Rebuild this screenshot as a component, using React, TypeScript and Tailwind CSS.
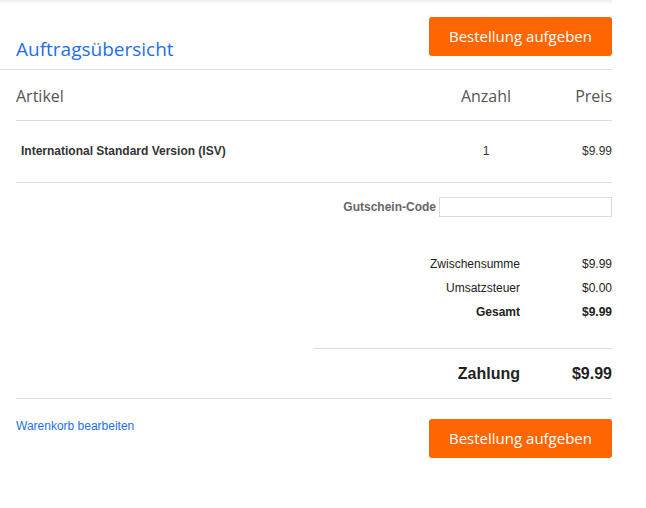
export default function App() {
  const arial = { fontFamily: '"Liberation Sans", Arial, sans-serif' };
  return (
    <div className="min-h-[508px] w-[646px] bg-white">
      <section className="w-[612px]">
        {/* top shadow */}
        <div className="h-[4px] bg-gradient-to-b from-[#ececec] to-white" />

        {/* Title row */}
        <div className="flex h-[66px] items-start justify-between border-b border-[#dcdcdc] pl-4">
          <h1 className="mt-[33px] font-['Open_Sans',sans-serif] text-[19px] leading-[24px] text-[#1f6fe8]">
            Auftragsübersicht
          </h1>
          <button className="mt-[13px] h-[39px] w-[183px] rounded-[3px] bg-[#ff6600] font-['Open_Sans',sans-serif] text-[15px] text-white">
            Bestellung aufgeben
          </button>
        </div>

        <div className="ml-4">
          {/* Head */}
          <div className="flex h-[51px] items-center border-b border-[#dcdcdc] pt-[1px] font-['Open_Sans',sans-serif] text-[16px] text-[#555]">
            <div className="flex-1">Artikel</div>
            <div className="w-[80px] text-center">Anzahl</div>
            <div className="w-[86px] text-right">Preis</div>
          </div>

          {/* Item */}
          <div
            className="flex h-[62px] items-center border-b border-[#dcdcdc] pb-[1px] text-[12px] text-[#333]"
            style={arial}
          >
            <div className="flex-1 pl-[5px] font-bold">International Standard Version (ISV)</div>
            <div className="w-[80px] text-center">1</div>
            <div className="w-[86px] text-right">$9.99</div>
          </div>

          {/* Coupon */}
          <div className="flex justify-end pt-[14px]" style={arial}>
            <label className="mr-[3px] text-[12px] font-bold leading-[20px] text-[#666]">Gutschein-Code</label>
            <input className="h-[20px] w-[173px] border border-[#dcdcdc] outline-none" />
          </div>

          {/* Summary */}
          <div className="mt-[40px] flex flex-col gap-[10px] text-[12px] leading-[14px] text-[#222]" style={arial}>
            <div className="flex justify-end">
              <span className="text-right">Zwischensumme</span>
              <span className="w-[92px] text-right">$9.99</span>
            </div>
            <div className="flex justify-end">
              <span className="text-right">Umsatzsteuer</span>
              <span className="w-[92px] text-right">$0.00</span>
            </div>
            <div className="flex justify-end font-bold">
              <span className="text-right">Gesamt</span>
              <span className="w-[92px] text-right">$9.99</span>
            </div>
          </div>

          <div className="mt-[29px] ml-auto w-[298px] border-b border-[#dcdcdc]" />

          <div
            className="flex h-[50px] items-center justify-end border-b border-[#dcdcdc] text-[16px] font-bold text-[#222]"
            style={arial}
          >
            <span>Zahlung</span>
            <span className="w-[92px] text-right">$9.99</span>
          </div>

          {/* Footer */}
          <div className="flex items-start justify-between pt-[20px]">
            <a className="-mt-[2px] text-[12px] text-[#1f6fe8]" style={arial} href="#">
              Warenkorb bearbeiten
            </a>
            <button className="h-[39px] w-[183px] rounded-[3px] bg-[#ff6600] font-['Open_Sans',sans-serif] text-[15px] text-white">
              Bestellung aufgeben
            </button>
          </div>
        </div>
      </section>
    </div>
  );
}
